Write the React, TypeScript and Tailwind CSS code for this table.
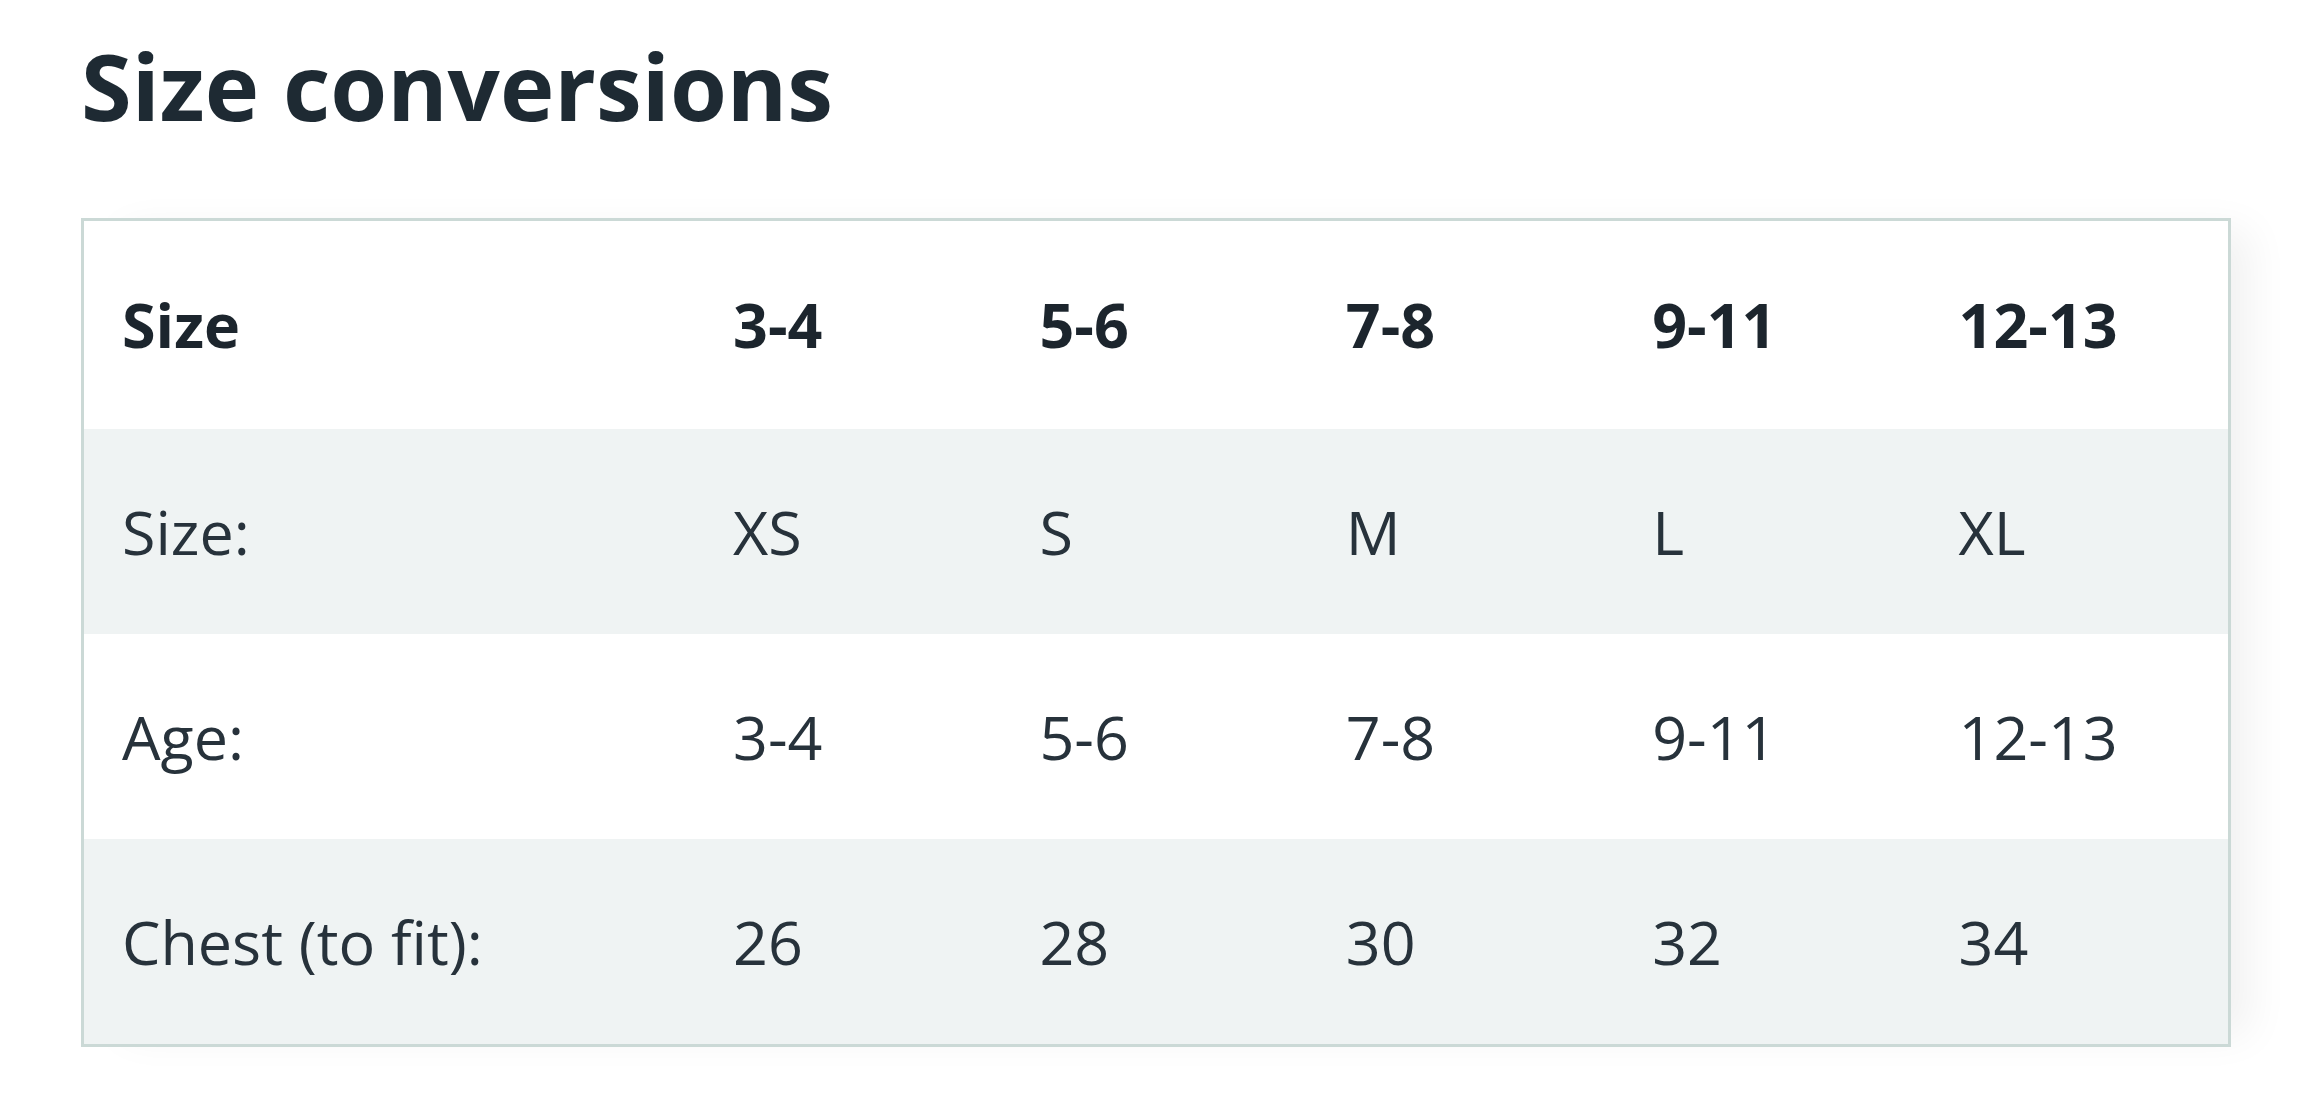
import React from "react";

interface SizeRow {
    label: string;
    values: string[];
}

const headers: string[] = ["3-4", "5-6", "7-8", "9-11", "12-13"];

const rows: SizeRow[] = [
    { label: "Size:", values: ["XS", "S", "M", "L", "XL"] },
    { label: "Age:", values: ["3-4", "5-6", "7-8", "9-11", "12-13"] },
    { label: "Chest (to fit):", values: ["26", "28", "30", "32", "34"] },
];

const App = () => {
    return (
        <div className="min-h-screen bg-white pl-[81px] pt-[40px] font-['Open_Sans',sans-serif]">
            <h2 className="text-[92px] leading-none font-bold text-[#1e2a33]">
                Size conversions
            </h2>

            <div className="mt-[86px] w-[2150px] border-[3px] border-[#cbd9d6] shadow-[30px_0_40px_-12px_rgba(0,0,0,0.06)]">
                <div className="grid h-[208px] grid-cols-[612px_repeat(5,1fr)] items-center bg-white text-[61px] font-bold text-[#1c252d]">
                    <div className="pl-[38px]">Size</div>
                    {headers.map((h, i) => (
                        <div key={i} className="pl-[37px]">
                            {h}
                        </div>
                    ))}
                </div>

                {rows.map((row, index) => (
                    <div
                        key={index}
                        className={
                            index % 2 === 0
                                ? "grid h-[205px] grid-cols-[612px_repeat(5,1fr)] items-center bg-[#eff3f3] text-[61px] text-[#27323b]"
                                : "grid h-[205px] grid-cols-[612px_repeat(5,1fr)] items-center bg-white text-[61px] text-[#27323b]"
                        }
                    >
                        <div className="pl-[38px]">{row.label}</div>
                        {row.values.map((v, i) => (
                            <div key={i} className="pl-[37px]">
                                {v}
                            </div>
                        ))}
                    </div>
                ))}
            </div>
        </div>
    );
};

export default App;
